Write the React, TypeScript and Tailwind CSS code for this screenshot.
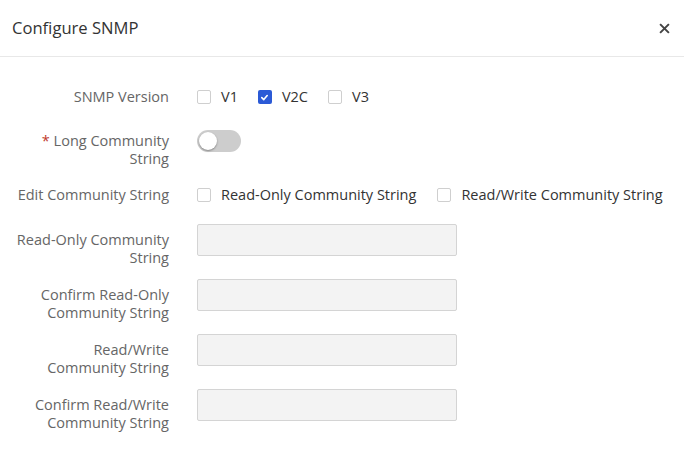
import React from "react";

function Box({ checked }: { checked?: boolean }) {
  return checked ? (
    <span className="flex h-[14px] w-[14px] items-center justify-center rounded-[2px] bg-[#2b5ad6]">
      <svg width="9" height="9" viewBox="0 0 10 10">
        <path d="M2 5.2 L4.2 7.3 L8 2.8" fill="none" stroke="#fff" strokeWidth="1.8" strokeLinecap="round" strokeLinejoin="round" />
      </svg>
    </span>
  ) : (
    <span className="h-[14px] w-[14px] rounded-[2px] border border-[#cfcfcf] bg-white" />
  );
}

function Check({ label, checked }: { label: string; checked?: boolean }) {
  return (
    <label className="flex items-center gap-[10px] text-[#333]">
      <Box checked={checked} />
      <span>{label}</span>
    </label>
  );
}

function InputRow({ label }: { label: React.ReactNode }) {
  return (
    <div className="flex h-[55px] items-start">
      <div className="w-[169px] pt-[7px] text-right leading-[18px] text-[#666]">{label}</div>
      <div className="ml-[28px] h-[32px] w-[260px] rounded-[2px] border border-[#d4d4d4] bg-[#f3f3f3]" />
    </div>
  );
}

export default function App() {
  return (
    <div
      className="h-[476px] w-[684px] bg-white text-[14.5px]"
      style={{ fontFamily: '"Open Sans", "Noto Sans", sans-serif' }}
    >
      <header className="flex h-[57px] items-center justify-between border-b border-[#e8e8e8] pl-[12px] pr-[14px]">
        <h1 className="text-[16.6px] text-[#333]">Configure SNMP</h1>
        <svg width="11" height="11" viewBox="0 0 10 10">
          <path d="M1 1 L9 9 M9 1 L1 9" stroke="#444" strokeWidth="1.8" />
        </svg>
      </header>

      <div className="pt-[24px]">
        <div className="flex h-[32px] items-center">
          <div className="w-[169px] text-right text-[#666]">SNMP Version</div>
          <div className="ml-[28px] flex items-center gap-[20px]">
            <Check label="V1" />
            <Check label="V2C" checked />
            <Check label="V3" />
          </div>
        </div>

        <div className="mt-[17px] flex items-start">
          <div className="w-[169px] pt-[2px] text-right leading-[18px] text-[#666]">
            <span className="text-[#c0392b]">* </span>Long Community
            <br />
            String
          </div>
          <div className="ml-[28px] flex h-[22px] w-[44px] items-center rounded-full bg-[#cdcdcd] px-[2px]">
            <span className="h-[18px] w-[18px] rounded-full bg-white shadow-[0_1px_2px_rgba(0,0,0,0.35)]" />
          </div>
        </div>

        <div className="mt-[11px] flex h-[32px] items-center">
          <div className="w-[169px] text-right text-[#666]">Edit Community String</div>
          <div className="ml-[28px] flex items-center gap-[21px]">
            <Check label="Read-Only Community String" />
            <Check label="Read/Write Community String" />
          </div>
        </div>

        <div className="mt-[13px]">
          <InputRow label={<>Read-Only Community<br />String</>} />
          <InputRow label={<>Confirm Read-Only<br />Community String</>} />
          <InputRow label={<>Read/Write<br />Community String</>} />
          <InputRow label={<>Confirm Read/Write<br />Community String</>} />
        </div>
      </div>
    </div>
  );
}
